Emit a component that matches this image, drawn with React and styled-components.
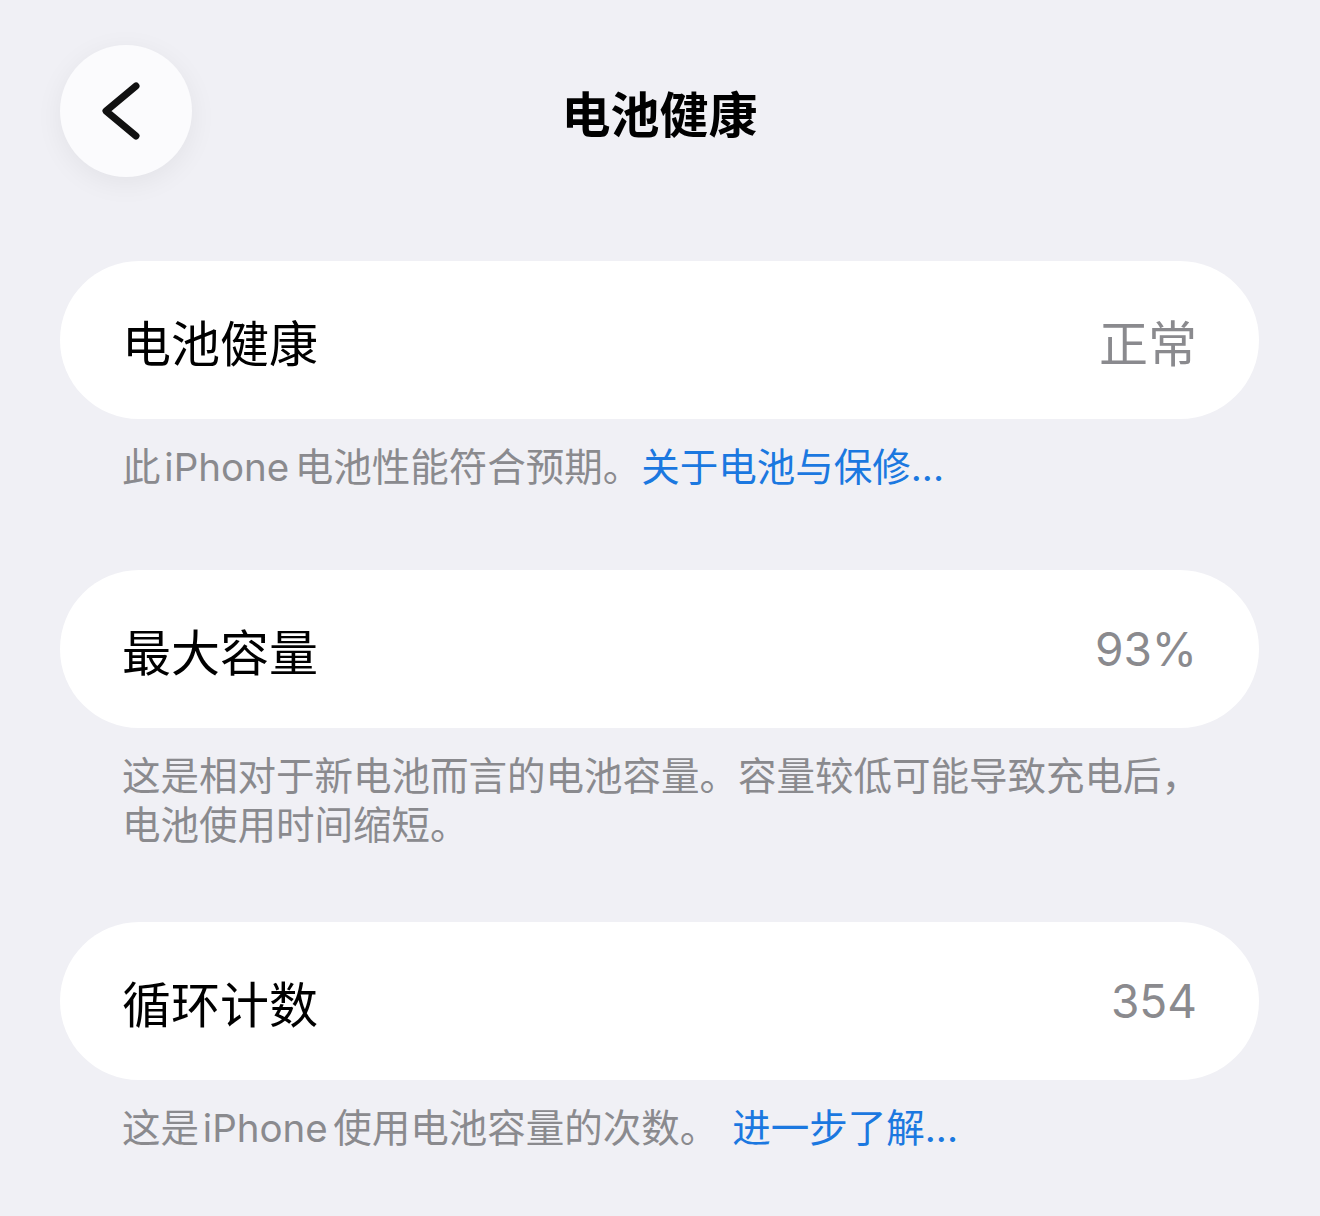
import React from "react";
import styled, { createGlobalStyle } from "styled-components";

const Global = createGlobalStyle`
  html, body { margin: 0; padding: 0; background: #f0f0f5; }
  body { font-family: Inter, "Noto Sans CJK SC", sans-serif; -webkit-font-smoothing: antialiased; }
`;

const Page = styled.div`
  width: 1320px;
  height: 1216px;
  background: #f0f0f5;
  box-sizing: border-box;
  padding: 45px 61px 0 60px;
  overflow: hidden;
`;

const Header = styled.div`
  display: grid;
  grid-template-columns: 132px 1fr 132px;
  align-items: center;
  height: 132px;
`;

const BackButton = styled.button`
  width: 132px;
  height: 132px;
  border-radius: 50%;
  border: none;
  background: #fbfbfd;
  box-shadow: 0 6px 28px rgba(0, 0, 0, 0.06);
  display: flex;
  align-items: center;
  justify-content: center;
  padding: 0;
  padding-right: 8px;
`;

const Title = styled.h1`
  margin: 0;
  text-align: center;
  font-family: "Noto Sans CJK SC", sans-serif;
  font-size: 49px;
  font-weight: 700;
  color: #000;
  line-height: 1;
`;

const Section = styled.section`
  margin-top: ${(p) => p.$top}px;
`;

const Card = styled.div`
  height: 158px;
  background: #ffffff;
  border-radius: 79px;
  display: flex;
  align-items: center;
  justify-content: space-between;
  padding: 0 62px 0 62px;
`;

const Label = styled.span`
  font-family: "Noto Sans CJK SC", sans-serif;
  font-size: 49px;
  color: #000;
  line-height: 1;
`;

const Value = styled.span`
  font-family: ${(p) => (p.$num ? 'Inter, "Noto Sans CJK SC", sans-serif' : '"Noto Sans CJK SC", sans-serif')};
  font-size: ${(p) => (p.$num ? 46 : 49)}px;
  color: #8a8a8e;
  line-height: 1;
`;

const Footer = styled.p`
  margin: 24px 0 0 62px;
  font-family: Inter, "Noto Sans CJK SC", sans-serif;
  font-size: 38.5px;
  line-height: 49px;
  color: #8a8a8e;
  max-width: 1100px;
`;

const Latin = styled.span`
  margin: 0 0.14em 0 0.1em;
`;

const Link = styled.span`
  color: #1b78e0;
  margin-left: ${(p) => p.$gap || 0}px;
`;

function Chevron() {
  return (
    <svg width="44" height="64" viewBox="0 0 44 64" fill="none">
      <path d="M36 7 L6 32 L36 57" stroke="#111" strokeWidth="7" strokeLinecap="round" strokeLinejoin="round" />
    </svg>
  );
}

export default function App() {
  return (
    <>
      <Global />
      <Page>
        <Header>
          <BackButton aria-label="返回">
            <Chevron />
          </BackButton>
          <Title>电池健康</Title>
          <div />
        </Header>

        <Section $top={84}>
          <Card>
            <Label>电池健康</Label>
            <Value>正常</Value>
          </Card>
          <Footer>
            此<Latin>iPhone</Latin>电池性能符合预期。<Link>关于电池与保修...</Link>
          </Footer>
        </Section>

        <Section $top={78}>
          <Card>
            <Label>最大容量</Label>
            <Value $num>93%</Value>
          </Card>
          <Footer>
            这是相对于新电池而言的电池容量。容量较低可能导致充电后，电池使用时间缩短。
          </Footer>
        </Section>

        <Section $top={72}>
          <Card>
            <Label>循环计数</Label>
            <Value $num>354</Value>
          </Card>
          <Footer>
            这是<Latin>iPhone</Latin>使用电池容量的次数。<Link $gap={14}>进一步了解...</Link>
          </Footer>
        </Section>
      </Page>
    </>
  );
}
